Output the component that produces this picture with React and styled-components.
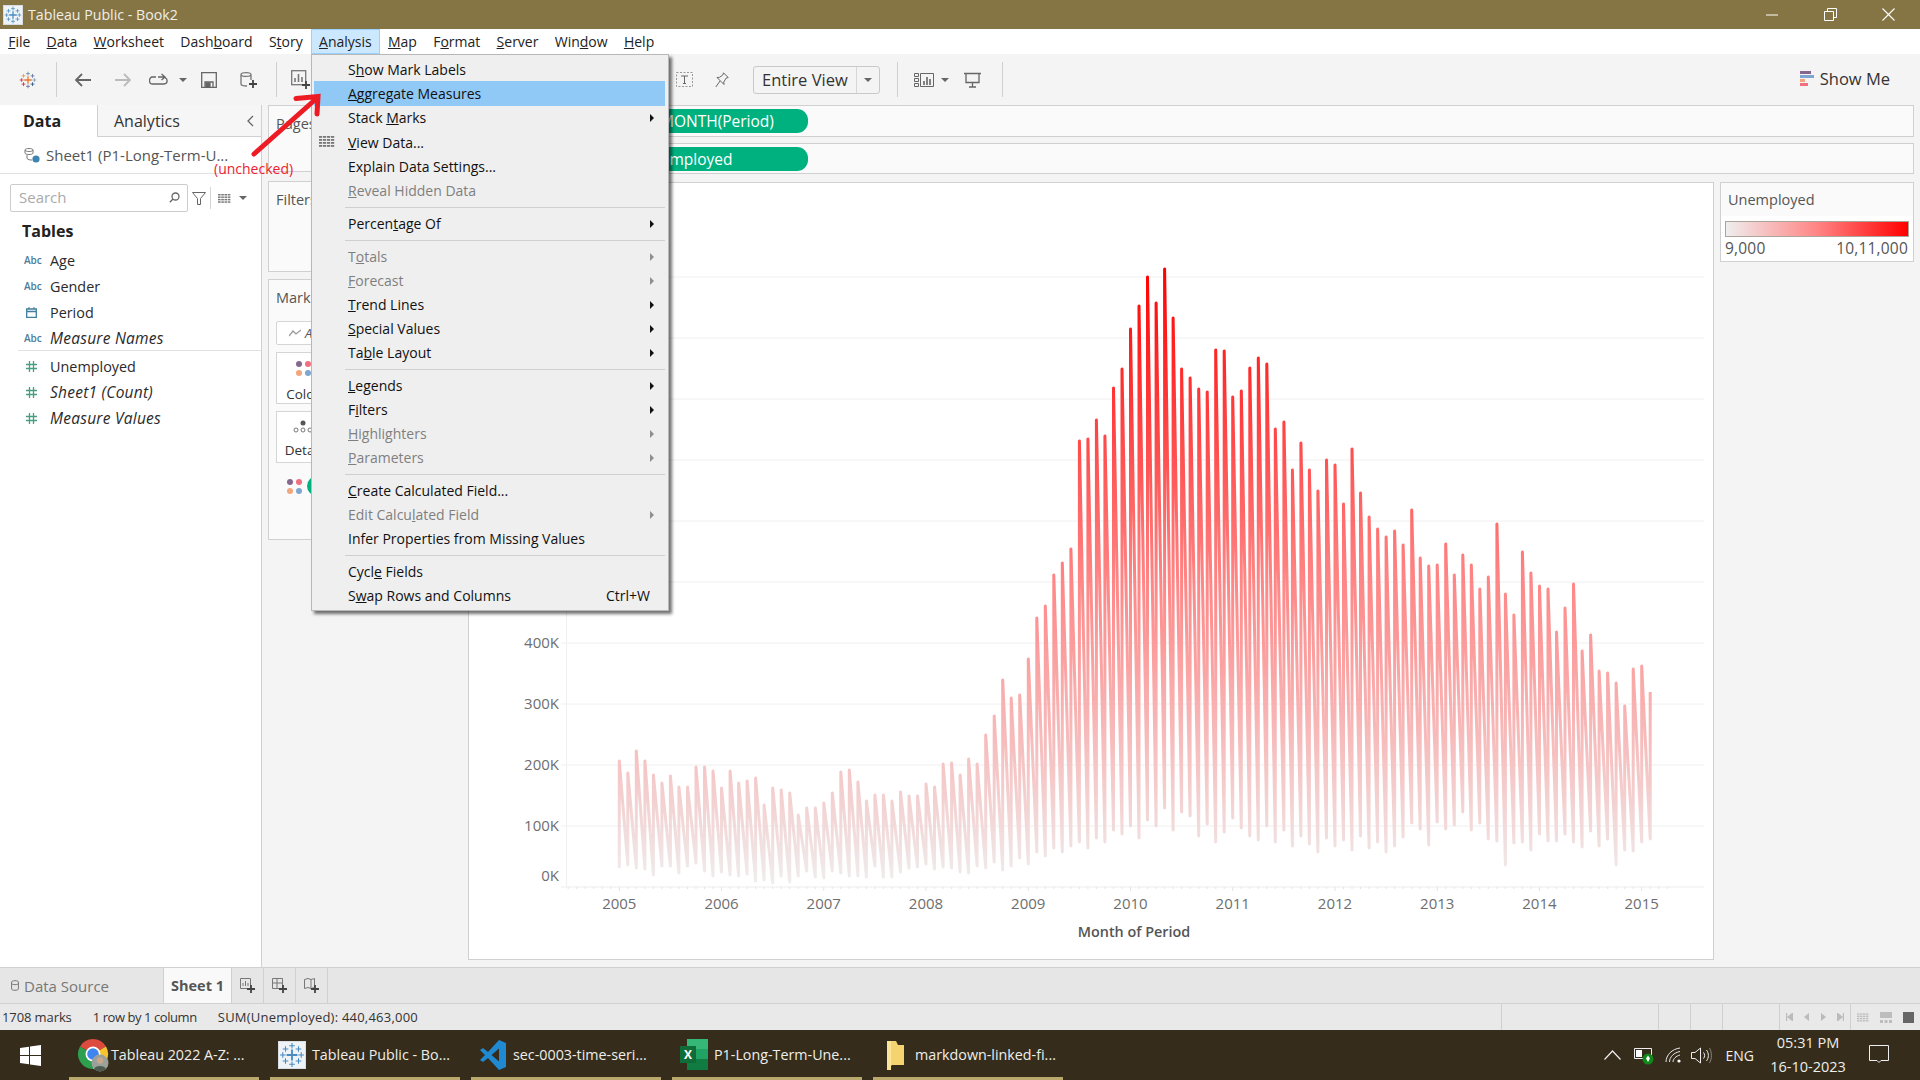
import React from "react"
import styled, { createGlobalStyle } from "styled-components"

const FONT = `"Open Sans", "Noto Sans", "Liberation Sans", sans-serif`

const GlobalStyle = createGlobalStyle`
  html, body {
    margin: 0;
    padding: 0;
    background: #f4f4f4;
    overflow: hidden;
  }
  * {
    box-sizing: border-box;
  }
`

/* ---- chart data: y position of every monthly peak and trough ---- */
const PEAKS = [
  761, 773, 751, 761, 775, 783, 776, 787, 787, 767, 767, 771,
  788, 771, 783, 781, 778, 805, 788, 790, 793, 815, 808, 808,
  803, 793, 772, 770, 782, 801, 795, 795, 801, 792, 796, 796,
  784, 787, 764, 763, 775, 759, 764, 735, 716, 680, 698, 695,
  659, 618, 606, 575, 563, 549, 441, 439, 420, 436, 388, 369,
  329, 306, 277, 303, 269, 318, 369, 378, 389, 392, 350, 351,
  397, 391, 368, 358, 364, 429, 422, 470, 443, 470, 491, 460,
  465, 504, 449, 493, 517, 529, 537, 531, 545, 510, 558, 566,
  565, 544, 575, 555, 565, 589, 577, 524, 594, 615, 552, 573,
  586, 589, 632, 608, 584, 651, 635, 671, 673, 683, 706, 669,
  666, 692,
]

const LOWS = [
  868, 865, 868, 869, 875, 866, 866, 873, 866, 863, 871, 876,
  872, 875, 876, 874, 881, 880, 883, 876, 882, 876, 871, 877,
  878, 871, 873, 876, 876, 877, 866, 877, 877, 872, 868, 867,
  864, 869, 867, 868, 872, 873, 866, 868, 862, 870, 866, 858,
  864, 852, 856, 848, 852, 846, 842, 848, 838, 842, 830, 834,
  826, 838, 820, 826, 808, 830, 812, 816, 836, 824, 842, 832,
  818, 828, 836, 840, 826, 842, 830, 846, 836, 844, 852, 838,
  846, 840, 850, 836, 848, 842, 852, 846, 837, 823, 829, 845,
  822, 829, 825, 812, 830, 823, 839, 841, 865, 843, 842, 850,
  834, 841, 841, 834, 842, 847, 831, 846, 839, 865, 850, 851,
  842, 839,
]

const X_START = 619.3
const X_STEP = 8.52
const AXIS_Y = 887
const monthX = (i) => X_START + i * X_STEP

const linePath = PEAKS.map((peak, i) => {
  const x = monthX(i).toFixed(1)
  return `${i === 0 ? "M" : "L"}${x} ${LOWS[i]} L${x} ${peak}`
}).join(" ")

const GRID_YS = [826, 765, 704, 643, 582, 521, 460, 399, 338, 277]
const Y_LABELS = [
  { text: "400K", y: 643 },
  { text: "300K", y: 704 },
  { text: "200K", y: 765 },
  { text: "100K", y: 826 },
  { text: "0K", y: 876 },
]
const YEARS = [2005, 2006, 2007, 2008, 2009, 2010, 2011, 2012, 2013, 2014, 2015]

const TOP_MENU = [
  { label: "File", key: 0 },
  { label: "Data", key: 0 },
  { label: "Worksheet", key: 0 },
  { label: "Dashboard", key: 4 },
  { label: "Story", key: 1 },
  { label: "Analysis", key: 0, open: true },
  { label: "Map", key: 0 },
  { label: "Format", key: 1 },
  { label: "Server", key: 0 },
  { label: "Window", key: 3 },
  { label: "Help", key: 0 },
]

const ANALYSIS_MENU = [
  { label: "Show Mark Labels", key: 1 },
  { label: "Aggregate Measures", key: 0, active: true },
  { label: "Stack Marks", key: 6, sub: true },
  { label: "View Data...", key: 0, icon: true },
  { label: "Explain Data Settings..." },
  { label: "Reveal Hidden Data", key: 0, off: true },
  { sep: true },
  { label: "Percentage Of", key: 6, sub: true },
  { sep: true },
  { label: "Totals", key: 1, sub: true, off: true },
  { label: "Forecast", key: 0, sub: true, off: true },
  { label: "Trend Lines", key: 0, sub: true },
  { label: "Special Values", key: 0, sub: true },
  { label: "Table Layout", key: 2, sub: true },
  { sep: true },
  { label: "Legends", key: 0, sub: true },
  { label: "Filters", key: 1, sub: true },
  { label: "Highlighters", key: 0, sub: true, off: true },
  { label: "Parameters", key: 0, sub: true, off: true },
  { sep: true },
  { label: "Create Calculated Field...", key: 0 },
  { label: "Edit Calculated Field", key: 10, sub: true, off: true },
  { label: "Infer Properties from Missing Values" },
  { sep: true },
  { label: "Cycle Fields", key: 4 },
  { label: "Swap Rows and Columns", key: 1, shortcut: "Ctrl+W" },
]

const FIELDS = [
  { name: "Age", type: "abc" },
  { name: "Gender", type: "abc" },
  { name: "Period", type: "date" },
  { name: "Measure Names", type: "abc", italic: true, divider: true },
  { name: "Unemployed", type: "num" },
  { name: "Sheet1 (Count)", type: "num", italic: true },
  { name: "Measure Values", type: "num", italic: true },
]

const TASKS = [
  { text: "Tableau 2022 A-Z: ...", icon: "chrome" },
  { text: "Tableau Public - Bo...", icon: "tableau" },
  { text: "sec-0003-time-seri...", icon: "code" },
  { text: "P1-Long-Term-Une...", icon: "excel" },
  { text: "markdown-linked-fi...", icon: "folder" },
]

/* ---- shell ---- */
const Page = styled.div`
  position: relative;
  width: 1920px;
  height: 1080px;
  display: flex;
  flex-direction: column;
  overflow: hidden;
  font-family: ${FONT};
  color: #222;
  background: #f4f4f4;
`

const TitleBar = styled.header`
  height: 29px;
  display: flex;
  align-items: center;
  padding: 0 3px;
  background: #857545;
  color: #f0eee6;
  font-size: 14.2px;
`

const TitleText = styled.span`
  margin-left: 5px;
  flex: 1;
`

const WindowButton = styled.div`
  width: 58px;
  height: 29px;
  display: flex;
  align-items: center;
  justify-content: center;
`

const MenuBar = styled.nav`
  height: 25px;
  display: flex;
  align-items: stretch;
  background: #fff;
  font-size: 14px;
`

const MenuTitle = styled.div`
  padding: 0 8.15px;
  display: flex;
  align-items: center;
  background: ${(p) => (p.$open ? "#cce8ff" : "transparent")};
  box-shadow: ${(p) => (p.$open ? "inset 0 0 0 1px #99d1ff" : "none")};
`

const Toolbar = styled.div`
  height: 51px;
  display: flex;
  align-items: center;
  background: #f4f4f4;
`

const ToolIcon = styled.div`
  width: ${(p) => p.$w}px;
  margin-left: ${(p) => p.$ml}px;
  display: flex;
  justify-content: center;
  align-items: center;
  flex: none;
`

const ToolSep = styled.div`
  width: 1px;
  height: 35px;
  margin-left: ${(p) => p.$ml}px;
  background: #d0d0d0;
  flex: none;
`

const Caret = styled.i`
  width: 0;
  height: 0;
  border-left: 4px solid transparent;
  border-right: 4px solid transparent;
  border-top: 4px solid ${(p) => p.$color || "#666"};
`

const FitSelect = styled.div`
  width: 127px;
  height: 28px;
  margin-left: 24px;
  display: flex;
  align-items: stretch;
  border: 1px solid #c9c9c9;
  border-radius: 3px;
  font-size: 16.5px;
  color: #333;
`

const FitLabel = styled.span`
  width: 103px;
  padding-left: 8px;
  display: flex;
  align-items: center;
  border-right: 1px solid #d6d6d6;
  white-space: nowrap;
`

const FitCaret = styled.span`
  flex: 1;
  display: flex;
  align-items: center;
  justify-content: center;
`

const ShowMe = styled.div`
  margin-left: auto;
  margin-right: 30px;
  padding-bottom: 2px;
  display: flex;
  align-items: center;
  gap: 6px;
  font-size: 16.5px;
  color: #333;
`

const ShowMeBars = styled.div`
  display: flex;
  flex-direction: column;
  gap: 1px;
`

const ShowMeBar = styled.i`
  display: block;
  height: 3px;
  width: ${(p) => p.$w}px;
  background: ${(p) => p.$color};
`

const Workspace = styled.main`
  height: 862px;
  display: flex;
`

/* ---- data pane ---- */
const DataPane = styled.aside`
  width: 262px;
  flex: none;
  background: #fff;
  border-right: 1px solid #d0d0d0;
`

const PaneTabs = styled.div`
  height: 32px;
  display: flex;
`

const DataTab = styled.div`
  width: 97px;
  padding-left: 23px;
  display: flex;
  align-items: center;
  font-size: 16px;
  font-weight: 700;
  color: #222;
`

const AnalyticsTab = styled.div`
  flex: 1;
  padding-left: 16px;
  display: flex;
  align-items: center;
  justify-content: space-between;
  padding-right: 7px;
  background: #f6f6f6;
  border-left: 1px solid #d0d0d0;
  border-bottom: 1px solid #d0d0d0;
  font-size: 16px;
  color: #333;
`

const SourceRow = styled.div`
  height: 37px;
  padding-left: 24px;
  display: flex;
  align-items: center;
  gap: 6px;
  border-bottom: 1px solid #e2e2e2;
  font-size: 15px;
  color: #555;
  white-space: nowrap;
`

const SearchRow = styled.div`
  margin-top: 10px;
  padding-left: 10px;
  display: flex;
  align-items: center;
`

const SearchBox = styled.div`
  width: 178px;
  height: 28px;
  padding: 0 7px 2px 8px;
  display: flex;
  align-items: center;
  justify-content: space-between;
  border: 1px solid #ccc;
  border-radius: 2px;
  color: #aaa;
  font-size: 15px;
`

const RowDivider = styled.i`
  width: 1px;
  height: 22px;
  margin: 0 7px 0 4px;
  background: #d5d5d5;
`

const TablesHeading = styled.h3`
  margin: 7px 0 4px 22px;
  height: 24px;
  line-height: 24px;
  font-size: 16px;
  font-weight: 700;
  color: #222;
`

const FieldRow = styled.div`
  height: 26px;
  margin-left: 18px;
  display: flex;
  align-items: center;
  font-size: ${(p) => (p.$italic ? "15.5px" : "14.4px")};
  font-style: ${(p) => (p.$italic ? "italic" : "normal")};
  letter-spacing: ${(p) => (p.$italic ? "0.25px" : "0")};
  color: #2a2a2a;
  ${(p) => p.$divider && "border-bottom: 1px solid #e2e2e2; margin-bottom: 2px;"}
`

const FieldIcon = styled.span`
  width: 32px;
  padding-left: 6px;
  flex: none;
  display: flex;
  align-items: center;
  font-size: 10px;
  font-style: normal;
  letter-spacing: 0;
  color: #4c7c9b;
  font-weight: 600;
  svg {
    margin-left: 2px;
  }
`

/* ---- cards column ---- */
const CardsColumn = styled.section`
  width: 206px;
  flex: none;
  padding-left: 6px;
  padding-right: 6px;
`

const Card = styled.div`
  height: ${(p) => p.$h}px;
  margin-bottom: ${(p) => p.$mb}px;
  padding: 8px 7px;
  background: #fafafa;
  border: 1px solid #d0d0d0;
  font-size: 14.5px;
  color: #555;
`

const MarkType = styled.div`
  height: 24px;
  margin-top: 14px;
  padding-left: 12px;
  display: flex;
  align-items: center;
  gap: 4px;
  background: #fff;
  border: 1px solid #d5d5d5;
  border-radius: 2px;
  font-size: 13px;
  font-style: italic;
`

const MarkTile = styled.div`
  width: 54px;
  height: 52px;
  margin-top: 7px;
  padding-top: 8px;
  display: flex;
  flex-direction: column;
  align-items: center;
  gap: ${(p) => p.$gap}px;
  background: #fff;
  border: 1px solid #d5d5d5;
  font-size: 13.5px;
  color: #333;
`

const DotGrid = styled.div`
  display: grid;
  grid-template-columns: 6px 6px;
  gap: 3px;
`

const Dot = styled.i`
  width: 6px;
  height: 6px;
  border-radius: 50%;
  background: ${(p) => p.$color};
`

const EncodingRow = styled.div`
  margin-top: 13px;
  padding-left: 11px;
  display: flex;
  align-items: center;
  gap: 5px;
`

const EncodingPill = styled.div`
  width: 140px;
  height: 20px;
  flex: none;
  border-radius: 10px;
  background: #00b180;
`

/* ---- view ---- */
const ViewColumn = styled.section`
  flex: 1;
  padding-right: 6px;
  display: flex;
  flex-direction: column;
`

const Shelf = styled.div`
  height: ${(p) => p.$h}px;
  margin-bottom: ${(p) => p.$mb}px;
  padding-left: 92px;
  display: flex;
  align-items: center;
  background: #fafafa;
  border: 1px solid #d0d0d0;
`

const Pill = styled.div`
  width: 247px;
  height: 24px;
  padding-left: ${(p) => p.$pad}px;
  display: flex;
  align-items: center;
  border-radius: 0 11px 11px 0;
  background: #00b180;
  color: #fff;
  font-size: 15.5px;
  white-space: nowrap;
`

const ViewRow = styled.div`
  height: 778px;
  display: flex;
  gap: 6px;
`

const ChartCard = styled.div`
  width: 1246px;
  flex: none;
  background: #fff;
  border: 1px solid #d0d0d0;
`

const ChartSvg = styled.svg`
  display: block;
`

const AxisText = styled.text`
  font-family: ${FONT};
  font-size: 15px;
  fill: #6e6e6e;
`

const AxisTitle = styled.text`
  font-family: ${FONT};
  font-size: 14.4px;
  font-weight: 600;
  fill: #555;
`

const LegendCard = styled.div`
  flex: 1;
  height: 80px;
  display: flex;
  flex-direction: column;
  background: #fff;
  border: 1px solid #d0d0d0;
`

const LegendTitle = styled.div`
  height: 33px;
  padding-left: 7px;
  display: flex;
  align-items: center;
  background: #fafafa;
  font-size: 14.5px;
  color: #555;
`

const LegendRamp = styled.div`
  height: 16px;
  margin: 5px 4px 0;
  border: 1px solid #aaa59a;
  background: linear-gradient(90deg, #efeeee 0%, #ff8585 50%, #ff0000 100%);
`

const LegendScale = styled.div`
  padding: 0 5px 0 4px;
  display: flex;
  justify-content: space-between;
  font-size: 15.5px;
  letter-spacing: 0.2px;
  color: #555;
`

/* ---- analysis menu ---- */
const Dropdown = styled.div`
  position: absolute;
  top: 54px;
  left: 311px;
  width: 358px;
  height: 557px;
  padding: 2px 3px 2px 2px;
  background: #efefef;
  border: 1px solid #b8b8b8;
  box-shadow: 3px 3px 3px rgba(0, 0, 0, 0.55);
  font-size: 14px;
`

const DropItem = styled.div`
  position: relative;
  height: 24px;
  padding: 0 15px 0 34px;
  display: flex;
  align-items: center;
  justify-content: space-between;
  color: ${(p) => (p.$off ? "#7f7f7f" : "#111")};
  background: ${(p) => (p.$active ? "#90c8f6" : "transparent")};
  &:nth-child(-n + 6) {
    height: 24.34px;
  }
`

const DropSep = styled.div`
  height: 9px;
  margin-left: 31px;
  display: flex;
  align-items: center;
  &::before {
    content: "";
    flex: 1;
    height: 1px;
    background: #cfcfcf;
  }
`

const SubArrow = styled.i`
  width: 0;
  height: 0;
  margin-right: -4px;
  border-top: 4px solid transparent;
  border-bottom: 4px solid transparent;
  border-left: 4px solid ${(p) => (p.$off ? "#8f8f8f" : "#111")};
`

const ItemIcon = styled.span`
  position: absolute;
  left: 5px;
  top: 6px;
  display: flex;
`

/* ---- screenshot annotation ---- */
const Annotation = styled.svg`
  position: absolute;
  left: 245px;
  top: 88px;
`

const AnnotationNote = styled.span`
  position: absolute;
  left: 214px;
  top: 159px;
  font-size: 14px;
  color: #ed1c2e;
`

/* ---- bottom bars ---- */
const TabBar = styled.div`
  height: 37px;
  display: flex;
  align-items: stretch;
  background: #e6e6e6;
  border-top: 1px solid #d0d0d0;
  border-bottom: 1px solid #d0d0d0;
`

const SourceTab = styled.div`
  width: 163px;
  padding-left: 11px;
  display: flex;
  align-items: center;
  gap: 5px;
  font-size: 15px;
  color: #777;
`

const SheetTab = styled.div`
  width: 69px;
  display: flex;
  align-items: center;
  justify-content: center;
  background: #f9f9f9;
  border-left: 1px solid #d0d0d0;
  border-right: 1px solid #d0d0d0;
  font-size: 14.5px;
  font-weight: 700;
  color: #555;
`

const NewSheetTab = styled.div`
  width: 32px;
  display: flex;
  align-items: center;
  justify-content: center;
  border-right: 1px solid #d0d0d0;
`

const StatusBar = styled.div`
  height: 26px;
  display: flex;
  align-items: stretch;
  background: #e9e9e9;
  font-size: 13px;
  color: #333;
`

const StatusText = styled.span`
  margin-left: ${(p) => p.$ml}px;
  letter-spacing: ${(p) => p.$ls}px;
  display: flex;
  align-items: center;
  white-space: nowrap;
`

const StatusCell = styled.div`
  width: ${(p) => p.$w}px;
  display: flex;
  align-items: center;
  justify-content: space-around;
  border-left: 1px solid #d0d0d0;
  ${(p) => p.$first && "margin-left: auto;"}
`

const Taskbar = styled.footer`
  height: 50px;
  display: flex;
  align-items: stretch;
  background: #352c1b;
  color: #eeeeea;
  font-size: 14.3px;
`

const StartButton = styled.div`
  width: 69px;
  padding-left: 20px;
  display: flex;
  align-items: center;
`

const TaskItems = styled.div`
  display: flex;
  gap: 11px;
`

const TaskItem = styled.div`
  width: 190px;
  padding: 2px 0 0 8px;
  display: flex;
  align-items: center;
  border-bottom: 3px solid #b9a96d;
  white-space: nowrap;
`

const TaskIcon = styled.span`
  width: 34px;
  flex: none;
  display: flex;
  align-items: center;
`

const Tray = styled.div`
  margin-left: auto;
  display: flex;
  align-items: center;
`

const TrayIcon = styled.span`
  margin-left: ${(p) => p.$ml}px;
  display: flex;
`

const Lang = styled.span`
  margin-left: 14px;
  font-size: 14px;
`

const Clock = styled.div`
  width: 90px;
  margin-left: 9px;
  text-align: center;
  font-size: 14.5px;
  line-height: 24px;
`

/* ---- helpers ---- */
const Accel = ({ text, at }) => {
  if (at === undefined) return text
  return (
    <span>
      {text.slice(0, at)}
      <u>{text[at]}</u>
      {text.slice(at + 1)}
    </span>
  )
}

const LOGO_MARKS = [
  [12, 12, 5, 1.7, "a"],
  [12, 3.5, 2.6, 1, "b"],
  [12, 20.5, 2.6, 1, "c"],
  [3.5, 12, 2.6, 1, "d"],
  [20.5, 12, 2.6, 1, "e"],
  [6, 6.5, 2.6, 1, "f"],
  [18, 6.5, 2.6, 1, "g"],
  [6, 17.5, 2.6, 1, "h"],
  [18, 17.5, 2.6, 1, "i"],
]

const LOGO_COLORS = { a: "#e8762c", b: "#59879b", c: "#5b6591", d: "#c72037", e: "#7099a6", f: "#eb912b", g: "#5b6591", h: "#c72037", i: "#1f457e" }

const TableauMark = ({ size = 20, mono }) => (
  <svg width={size} height={size} viewBox="0 0 24 24">
    {LOGO_MARKS.map(([x, y, r, w, id]) => (
      <path
        key={id}
        d={`M${x - r} ${y}H${x + r}M${x} ${y - r}V${y + r}`}
        stroke={mono || LOGO_COLORS[id]}
        strokeWidth={w}
      />
    ))}
  </svg>
)

const TableauTile = styled.span`
  display: flex;
  align-items: center;
  justify-content: center;
  width: ${(p) => p.$size}px;
  height: ${(p) => p.$size}px;
  background: #eef3f7;
  border: 1px solid #d7dde2;
`

const GreyIcon = ({ w = 20, h = 20, box, children, color = "#666" }) => (
  <svg width={w} height={h} viewBox={box || `0 0 ${w} ${h}`} fill="none" stroke={color} strokeWidth="1.3">
    {children}
  </svg>
)

const HashIcon = () => (
  <GreyIcon w={11} h={11} color="#4a9e80">
    <path d="M3.5 0V11M7.5 0V11M0 3.5H11M0 7.5H11" />
  </GreyIcon>
)

const CalendarIcon = () => (
  <GreyIcon w={11} h={11} color="#3f7f9e">
    <path d="M.7 2H10.3V10.3H.7ZM.7 4.5H10.3M3 .3V2M8 .3V2" />
  </GreyIcon>
)

const GridIcon = ({ color = "#777", w = 16, h = 11 }) => (
  <svg width={w} height={h} viewBox="0 0 16 11">
    {[0, 3, 6, 9].map((y) =>
      [0, 4, 8, 12].map((x) => <rect key={`${x}-${y}`} x={x} y={y} width="3.2" height="1.8" fill={color} />)
    )}
  </svg>
)

const PlusBadge = ({ x, y }) => <path d={`M${x - 4} ${y}H${x + 4}M${x} ${y - 4}V${y + 4}`} stroke="#444" strokeWidth="1.8" />

const ChartAddIcon = () => (
  <GreyIcon w={20} h={20} color="#777">
    <rect x=".7" y=".7" width="14" height="14" />
    <path d="M4 12V8M7.5 12V4M11 12V7" strokeWidth="1.6" />
    <PlusBadge x={15} y={15} />
  </GreyIcon>
)

const TaskGlyph = ({ name }) => {
  if (name === "chrome") {
    return (
      <svg width="32" height="34" viewBox="0 0 32 34">
        <path d="M16 16L3 8.5A15 15 0 0 1 29 8.5Z" fill="#dd4b3e" />
        <path d="M16 16L3 8.5A15 15 0 0 0 16 31Z" fill="#2e9e4f" />
        <path d="M16 16L29 8.5A15 15 0 0 1 16 31Z" fill="#f7c331" />
        <circle cx="16" cy="16" r="7.5" fill="#fff" />
        <circle cx="16" cy="16" r="5.8" fill="#3f85f0" />
        <circle cx="23" cy="25" r="8.5" fill="#9aa09a" />
        <circle cx="23" cy="22.5" r="3.2" fill="#c9a78e" />
        <path d="M17 31C18 27 28 27 29 31A8.5 8.5 0 0 1 17 31Z" fill="#4d5a50" />
      </svg>
    )
  }
  if (name === "tableau") {
    return (
      <TableauTile $size={28}>
        <TableauMark size={26} mono="#4a8bc0" />
      </TableauTile>
    )
  }
  if (name === "code") {
    return (
      <svg width="28" height="32" viewBox="0 0 28 32">
        <path d="M20 1L9 13 4 9 1 11 6 16 1 21 4 23 9 19 20 31 27 28V4Z" fill="#1f8ad2" />
        <path d="M20 9.5L12.5 16 20 22.5Z" fill="#352c1b" />
      </svg>
    )
  }
  if (name === "excel") {
    return <ExcelGlyph />
  }
  return (
    <FolderWrap>
      <svg width="19" height="30" viewBox="0 0 19 30">
        <path d="M1 1H10L12 5H18V25H6L1 30Z" fill="#f5d36f" />
        <path d="M1 1H5V30H1Z" fill="#fbe49a" />
      </svg>
    </FolderWrap>
  )
}

const FolderWrap = styled.span`
  display: flex;
  padding-left: 5px;
`

const ExcelBox = styled.span`
  position: relative;
  display: block;
  width: 28px;
  height: 31px;
  background: linear-gradient(180deg, #34b777 0 33%, #21a366 33% 66%, #107c41 66% 100%);
  background-clip: content-box;
  padding-left: 7px;
`

const ExcelX = styled.b`
  position: absolute;
  left: 0;
  top: 7px;
  width: 16px;
  height: 17px;
  display: flex;
  align-items: center;
  justify-content: center;
  background: #0f6c39;
  color: #fff;
  font-size: 12px;
`

const ExcelGlyph = () => (
  <ExcelBox>
    <ExcelX>X</ExcelX>
  </ExcelBox>
)

const DOT_COLORS = ["#86688f", "#f16f7f", "#f3a67e", "#7ea6d1"]

const ColorDots = () => (
  <DotGrid>
    {DOT_COLORS.map((c) => (
      <Dot key={c} $color={c} />
    ))}
  </DotGrid>
)

const App = () => (
  <Page>
    <GlobalStyle />

    <TitleBar>
      <TableauTile $size={20}>
        <TableauMark size={18} mono="#4a8bc0" />
      </TableauTile>
      <TitleText>Tableau Public - Book2</TitleText>
      <WindowButton>
        <svg width="12" height="2"><path d="M0 1H12" stroke="#fff" /></svg>
      </WindowButton>
      <WindowButton>
        <svg width="13" height="13" fill="none" stroke="#fff"><path d="M.5 3.5H9.5V12.5H.5ZM3.5 3.5V.5H12.5V9.5H9.5" /></svg>
      </WindowButton>
      <WindowButton>
        <svg width="13" height="13" stroke="#fff" strokeWidth="1.1"><path d="M.5 .5L12.5 12.5M12.5 .5L.5 12.5" /></svg>
      </WindowButton>
    </TitleBar>

    <MenuBar>
      {TOP_MENU.map((m) => (
        <MenuTitle key={m.label} $open={m.open}>
          <Accel text={m.label} at={m.key} />
        </MenuTitle>
      ))}
    </MenuBar>

    <Toolbar>
      <ToolIcon $w={18} $ml={19}><TableauMark size={18} /></ToolIcon>
      <ToolSep $ml={19} />
      <ToolIcon $w={18} $ml={17}>
        <GreyIcon w={18} h={16} color="#666"><path d="M17 8H2M8 2L2 8L8 14" strokeWidth="1.8" /></GreyIcon>
      </ToolIcon>
      <ToolIcon $w={18} $ml={22}>
        <GreyIcon w={18} h={16} color="#bbb"><path d="M1 8H16M10 2L16 8L10 14" strokeWidth="1.8" /></GreyIcon>
      </ToolIcon>
      <ToolIcon $w={20} $ml={17}>
        <GreyIcon w={20} h={14} color="#666"><path d="M7 4H3.5C-.5 4 -.5 11 3.5 11H15C19 11 19 6 16 4.5M9 4H16M12.5 1L16 4L12.5 7" /></GreyIcon>
      </ToolIcon>
      <ToolIcon $w={8} $ml={10}><Caret /></ToolIcon>
      <ToolIcon $w={16} $ml={14}>
        <GreyIcon w={16} h={16} color="#666"><path d="M.7 .7H15.3V15.3H.7ZM4 15V10H12V15" /><rect x="5" y="11" width="4" height="4" fill="#666" /></GreyIcon>
      </ToolIcon>
      <ToolIcon $w={18} $ml={23}>
        <GreyIcon w={18} h={18} color="#777">
          <path d="M1 3.5C1 1 11 1 11 3.5V9M1 3.5C1 6 11 6 11 3.5M1 3.5V13C1 14.5 4 15 7 15" />
          <PlusBadge x={13} y={13} />
        </GreyIcon>
      </ToolIcon>
      <ToolSep $ml={18} />
      <ToolIcon $w={20} $ml={14}><ChartAddIcon /></ToolIcon>

      <ToolIcon $w={17} $ml={365}>
        <GreyIcon w={17} h={15} color="#999">
          <rect x=".5" y=".5" width="16" height="14" strokeDasharray="2 1.5" strokeWidth="1" />
          <path d="M5 4H12M8.5 4V11.5M7 11.5H10" stroke="#666" strokeWidth="1" />
        </GreyIcon>
      </ToolIcon>
      <ToolIcon $w={14} $ml={22}>
        <GreyIcon w={14} h={16} color="#666"><path d="M8.5 .8L13.2 5.5L11 6.2L8.8 10L9 12.5L2 5.5L4.5 5.3L7.8 3ZM5 9L.8 15" strokeWidth="1" /></GreyIcon>
      </ToolIcon>
      <FitSelect>
        <FitLabel>Entire View</FitLabel>
        <FitCaret><Caret /></FitCaret>
      </FitSelect>
      <ToolSep $ml={17} />
      <ToolIcon $w={20} $ml={16}>
        <GreyIcon w={20} h={14} color="#666">
          <path d="M.5 .5H4.5V3.5H.5ZM.5 5.5H4.5V8.5H.5ZM.5 10.5H4.5V13.5H.5ZM6.5 .5H19.5V13.5H6.5Z" strokeWidth="1" />
          <path d="M10 12V8M13 12V4M16 12V6" strokeWidth="1.6" />
        </GreyIcon>
      </ToolIcon>
      <ToolIcon $w={6} $ml={8}><Caret /></ToolIcon>
      <ToolIcon $w={17} $ml={16}>
        <GreyIcon w={17} h={16} color="#666"><path d="M0 1.5H17M2 1.5V10.5H15V1.5M8.5 10.5V15M5 15H12" /></GreyIcon>
      </ToolIcon>
      <ToolSep $ml={21} />
      <ShowMe>
        <ShowMeBars>
          <ShowMeBar $w={11} $color="#86688f" />
          <ShowMeBar $w={14} $color="#7ea6d1" />
          <ShowMeBar $w={5} $color="#f3a67e" />
          <ShowMeBar $w={8} $color="#f16f7f" />
        </ShowMeBars>
        Show Me
      </ShowMe>
    </Toolbar>

    <Workspace>
      <DataPane>
        <PaneTabs>
          <DataTab>Data</DataTab>
          <AnalyticsTab>
            Analytics
            <GreyIcon w={7} h={12} color="#666"><path d="M6 1L1 6L6 11" /></GreyIcon>
          </AnalyticsTab>
        </PaneTabs>
        <SourceRow>
          <svg width="16" height="16" viewBox="0 0 16 16" fill="none" stroke="#777" strokeWidth="1">
            <path d="M1 3C1 1 9 1 9 3V6C9 8 1 8 1 6ZM1 3C1 5 9 5 9 3M3 8V11C3 13 7 13 8 13" />
            <circle cx="12" cy="12" r="3.6" fill="#3e84b0" stroke="none" />
          </svg>
          Sheet1 (P1-Long-Term-U...
        </SourceRow>
        <SearchRow>
          <SearchBox>
            Search
            <GreyIcon w={11} h={11} color="#666"><circle cx="6.5" cy="4.5" r="3.5" /><path d="M4 7L.8 10.3" /></GreyIcon>
          </SearchBox>
          <ToolIcon $w={14} $ml={4}>
            <GreyIcon w={14} h={13} color="#666"><path d="M.5 .5H13.5L8.5 6.5V12.5H5.5V6.5Z" strokeWidth="1" /></GreyIcon>
          </ToolIcon>
          <RowDivider />
          <GridIcon w={13} h={9} />
          <ToolIcon $w={8} $ml={8}><Caret /></ToolIcon>
        </SearchRow>
        <TablesHeading>Tables</TablesHeading>
        {FIELDS.map((f) => (
          <FieldRow key={f.name} $italic={f.italic} $divider={f.divider}>
            <FieldIcon>
              {f.type === "abc" && "Abc"}
              {f.type === "date" && <CalendarIcon />}
              {f.type === "num" && <HashIcon />}
            </FieldIcon>
            {f.name}
          </FieldRow>
        ))}
      </DataPane>

      <CardsColumn>
        <Card $h={67} $mb={9}>Pages</Card>
        <Card $h={91} $mb={7}>Filters</Card>
        <Card $h={261} $mb={0}>
          Marks
          <MarkType>
            <GreyIcon w={12} h={8} color="#999"><path d="M0 7L4 2L7 5L12 1" /></GreyIcon>
            Automatic
          </MarkType>
          <MarkTile $gap={9}>
            <ColorDots />
            Color
          </MarkTile>
          <MarkTile $gap={7}>
            <svg width="22" height="14" fill="none" stroke="#777">
              <circle cx="11" cy="3" r="2.5" fill="#555" stroke="none" />
              <circle cx="4" cy="10" r="2" />
              <circle cx="11" cy="10" r="2" />
              <circle cx="18" cy="10" r="2" />
            </svg>
            Detail
          </MarkTile>
          <EncodingRow>
            <ColorDots />
            <EncodingPill />
          </EncodingRow>
        </Card>
      </CardsColumn>

      <ViewColumn>
        <Shelf $h={32} $mb={6}><Pill $pad={99}>MONTH(Period)</Pill></Shelf>
        <Shelf $h={31} $mb={8}><Pill $pad={79}>Unemployed</Pill></Shelf>
        <ViewRow>
          <ChartCard>
            <ChartSvg width="1244" height="776" viewBox="469 183 1244 776">
              <defs>
                <linearGradient id="valueRamp" gradientUnits="userSpaceOnUse" x1="0" y1={AXIS_Y} x2="0" y2="270">
                  <stop offset="0" stopColor="#efeeee" />
                  <stop offset="0.5" stopColor="#ff8585" />
                  <stop offset="1" stopColor="#ff0000" />
                </linearGradient>
              </defs>
              {GRID_YS.map((y) => (
                <line key={y} x1="561" x2="1704" y1={y} y2={y} stroke="#f0f0f0" />
              ))}
              <line x1="566.5" x2="566.5" y1="240" y2={AXIS_Y} stroke="#f0f0f0" />
              <line x1="561" x2="1704" y1={AXIS_Y} y2={AXIS_Y} stroke="#ededed" />
              {Array.from({ length: 130 }, (_, i) => {
                const x = monthX(i - 6)
                const isYear = (i - 6) % 12 === 0
                return <line key={i} x1={x} x2={x} y1={AXIS_Y} y2={AXIS_Y + (isYear ? 4 : 2)} stroke="#e4e4e4" />
              })}
              <path d={linePath} fill="none" stroke="url(#valueRamp)" strokeWidth="3" strokeLinejoin="round" />
              {Y_LABELS.map((l) => (
                <AxisText key={l.text} x="559" y={l.y + 5} textAnchor="end">{l.text}</AxisText>
              ))}
              {YEARS.map((year, i) => (
                <AxisText key={year} x={monthX(i * 12)} y="909" textAnchor="middle">{year}</AxisText>
              ))}
              <AxisTitle x="1134" y="937" textAnchor="middle">Month of Period</AxisTitle>
            </ChartSvg>
          </ChartCard>
          <LegendCard>
            <LegendTitle>Unemployed</LegendTitle>
            <LegendRamp />
            <LegendScale>
              <span>9,000</span>
              <span>10,11,000</span>
            </LegendScale>
          </LegendCard>
        </ViewRow>
      </ViewColumn>
    </Workspace>

    <TabBar>
      <SourceTab>
        <GreyIcon w={8} h={11} color="#777"><path d="M.6 2C.6 .3 7.4 .3 7.4 2V9C7.4 10.7 .6 10.7 .6 9ZM.6 3.5C.6 5 7.4 5 7.4 3.5" strokeWidth="1" /></GreyIcon>
        Data Source
      </SourceTab>
      <SheetTab>Sheet 1</SheetTab>
      <NewSheetTab>
        <GreyIcon w={15} h={15} color="#777">
          <path d="M.5 .5H10.5V10.5H.5ZM3 8V5M5.5 8V3M8 8V5" strokeWidth="1" />
          <PlusBadge x={11} y={11} />
        </GreyIcon>
      </NewSheetTab>
      <NewSheetTab>
        <GreyIcon w={15} h={15} color="#777">
          <path d="M.5 .5H10.5V10.5H.5ZM.5 5H10.5M5 .5V10.5" strokeWidth="1" />
          <PlusBadge x={11} y={11} />
        </GreyIcon>
      </NewSheetTab>
      <NewSheetTab>
        <GreyIcon w={15} h={15} color="#777">
          <path d="M.5 1.5L4 .5L7 1.5L10.5 .5V9.5L7 10.5L4 9.5L.5 10.5ZM7 1.5V10.5" strokeWidth="1" />
          <PlusBadge x={11} y={11} />
        </GreyIcon>
      </NewSheetTab>
    </TabBar>

    <StatusBar>
      <StatusText $ml={2} $ls={-0.1}>1708 marks</StatusText>
      <StatusText $ml={21} $ls={-0.43}>1 row by 1 column</StatusText>
      <StatusText $ml={21} $ls={0.22}>SUM(Unemployed): 440,463,000</StatusText>
      <StatusCell $first $w={157} />
      <StatusCell $w={32} />
      <StatusCell $w={32} />
      <StatusCell $w={57} />
      <StatusCell $w={71}>
        <GreyIcon w={7} h={8} color="#bbb"><path d="M.5 0V8M7 0L2 4L7 8Z" fill="#bbb" /></GreyIcon>
        <GreyIcon w={5} h={8} color="#bbb"><path d="M5 0L0 4L5 8Z" fill="#bbb" stroke="none" /></GreyIcon>
        <GreyIcon w={5} h={8} color="#bbb"><path d="M0 0L5 4L0 8Z" fill="#bbb" stroke="none" /></GreyIcon>
        <GreyIcon w={7} h={8} color="#bbb"><path d="M6.5 0V8M0 0L5 4L0 8Z" fill="#bbb" /></GreyIcon>
      </StatusCell>
      <StatusCell $w={70}>
        <GridIcon color="#bdbdbd" w={12} h={11} />
        <svg width="12" height="11"><path d="M0 0H12V6H0ZM0 8H3V11H0ZM4.5 8H7.5V11H4.5ZM9 8H12V11H9Z" fill="#bdbdbd" /></svg>
        <svg width="11" height="11"><rect width="11" height="11" fill="#666" /></svg>
      </StatusCell>
    </StatusBar>

    <Taskbar>
      <StartButton>
        <svg width="21" height="21" viewBox="0 0 21 21"><path d="M0 3L9 1.7V10H0ZM10 1.5L21 0V10H10ZM0 11H9V19.3L0 18ZM10 11H21V21L10 19.5Z" fill="#fff" /></svg>
      </StartButton>
      <TaskItems>
        {TASKS.map((t) => (
          <TaskItem key={t.text}>
            <TaskIcon><TaskGlyph name={t.icon} /></TaskIcon>
            {t.text}
          </TaskItem>
        ))}
      </TaskItems>
      <Tray>
        <TrayIcon $ml={0}>
          <svg width="17" height="10" fill="none" stroke="#eee" strokeWidth="1.2"><path d="M.5 9.5L8.5 1L16.5 9.5" /></svg>
        </TrayIcon>
        <TrayIcon $ml={13}>
          <svg width="20" height="20" viewBox="0 0 20 20">
            <path d="M.5 3.5H17.5V13.5H.5Z" fill="none" stroke="#eee" />
            <rect x="2" y="5" width="6" height="7" fill="#fff" />
            <circle cx="14" cy="14" r="5.5" fill="#10891a" />
            <path d="M14 10.5L16 13.5L14 17L12 13.5Z" fill="#fff" />
          </svg>
        </TrayIcon>
        <TrayIcon $ml={11}>
          <svg width="17" height="16" fill="none" stroke="#e8e8e8"><path d="M1 15C1 8 7 2 15 1M4.5 15C4.5 10 9 5.5 15 4.5M8 15C8 12 11 9 15 8" /><circle cx="14" cy="14" r="1.6" fill="#fff" stroke="none" /></svg>
        </TrayIcon>
        <TrayIcon $ml={9}>
          <svg width="21" height="17" fill="none" stroke="#eee"><path d="M.5 5.5H4L9.5 1V16L4 11.5H.5ZM12.5 5.5C14 7.5 14 9.5 12.5 11.5M15.5 3C18 6.5 18 10.5 15.5 14" /><path d="M18.5 1C21 5 21 12 18.5 16" stroke="#8d887c" /></svg>
        </TrayIcon>
        <Lang>ENG</Lang>
        <Clock>
          05:31 PM
          <br />
          16-10-2023
        </Clock>
        <TrayIcon $ml={16}>
          <svg width="20" height="20" fill="none" stroke="#eee"><path d="M.5 .5H19.5V15.5H12L10 17.5L8 15.5H.5Z" /></svg>
        </TrayIcon>
        <TrayIcon $ml={31} />
      </Tray>
    </Taskbar>

    <Dropdown>
      {ANALYSIS_MENU.map((item, i) =>
        item.sep ? (
          <DropSep key={i} />
        ) : (
          <DropItem key={item.label} $off={item.off} $active={item.active}>
            {item.icon && <ItemIcon><GridIcon /></ItemIcon>}
            <Accel text={item.label} at={item.key} />
            {item.sub && <SubArrow $off={item.off} />}
            {item.shortcut}
          </DropItem>
        )
      )}
    </Dropdown>

    <Annotation width="80" height="72" viewBox="245 88 80 72" fill="none" stroke="#ed1c24" strokeWidth="5" strokeLinecap="round">
      <path d="M254 154L317 98M296 98.5L318 96.5L317 114" />
    </Annotation>
    <AnnotationNote>(unchecked)</AnnotationNote>
  </Page>
)

export default App
